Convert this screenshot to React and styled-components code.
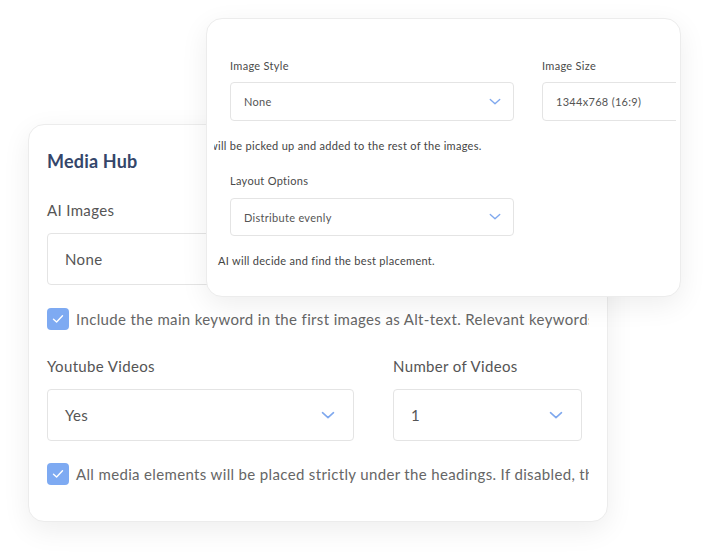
import React from 'react';
import styled, { createGlobalStyle } from 'styled-components';

const GlobalStyle = createGlobalStyle`
    html, body {
        margin: 0;
        padding: 0;
        background: #ffffff;
    }
    body {
        font-family: Lato, "Open Sans", sans-serif;
    }
`;

const Stage = styled.div`
    position: relative;
    width: 704px;
    height: 553px;
    overflow: hidden;
    padding: 124px 0 0 28px;
    box-sizing: border-box;
`;

const Card = styled.div`
    background: #ffffff;
    border: 1px solid #ececec;
    border-radius: 16px;
    box-shadow: 0 8px 28px rgba(0, 0, 0, 0.07);
    box-sizing: border-box;
`;

const BackCard = styled(Card)`
    width: 580px;
    height: 398px;
    padding: 26px 18px 0 18px;
`;

const FrontCard = styled(Card)`
    position: absolute;
    left: 206px;
    top: 18px;
    width: 475px;
    height: 279px;
    padding: 40px 4px 0 7px;
`;

const Clip = styled.div`
    overflow: hidden;
    width: 100%;
`;

const Title = styled.h2`
    margin: 0;
    font-size: 18px;
    line-height: 21px;
    font-weight: 700;
    letter-spacing: 0.2px;
    color: #34466a;
`;

const Label = styled.div`
    font-size: ${p => p.small ? '11px' : '15px'};
    line-height: ${p => p.small ? '14px' : '18px'};
    letter-spacing: ${p => p.small ? '0.3px' : '0.35px'};
    color: ${p => p.small ? '#4a4a4a' : '#555555'};
    margin-top: ${p => p.top || 0}px;
    white-space: nowrap;
`;

const Select = styled.div`
    display: flex;
    align-items: center;
    justify-content: space-between;
    box-sizing: border-box;
    width: ${p => p.w ? p.w + 'px' : '100%'};
    height: ${p => p.h}px;
    margin-top: ${p => p.top}px;
    padding: 0 ${p => p.small ? 12 : 18}px 0 ${p => p.small ? 13 : 17}px;
    border: 1px solid #e4e4e4;
    border-radius: 4px;
    background: #fff;
    font-size: ${p => p.small ? '11px' : '15px'};
    letter-spacing: ${p => p.small ? '0.3px' : '0.35px'};
    color: #555555;
    white-space: nowrap;
`;

const Row = styled.div`
    display: grid;
    grid-template-columns: ${p => p.cols};
    column-gap: ${p => p.gap}px;
    margin-top: ${p => p.top || 0}px;
`;

const CheckRow = styled.div`
    display: flex;
    align-items: center;
    gap: 7px;
    margin-top: ${p => p.top}px;
    width: 542px;
    overflow: hidden;
    white-space: nowrap;
    font-size: 15px;
    letter-spacing: 0.35px;
    color: #666666;
`;

const Box = styled.span`
    flex: none;
    width: 22px;
    height: 22px;
    border-radius: 4px;
    background: #7eaaf2;
    display: flex;
    align-items: center;
    justify-content: center;
`;

const Hint = styled.div`
    font-size: 11px;
    line-height: 14px;
    letter-spacing: 0.3px;
    color: #444444;
    white-space: nowrap;
    margin-top: ${p => p.top}px;
    margin-left: ${p => p.left}px;
`;

const Inner = styled.div`
    padding-left: 16px;
`;

const Chevron = ({ size = 14 }) => (
    <svg width={size} height={size * 0.6} viewBox="0 0 14 8" fill="none">
        <path d="M1.5 1.5 L7 6.5 L12.5 1.5" stroke="#7fa8ee" strokeWidth="1.6" strokeLinecap="round" strokeLinejoin="round" />
    </svg>
);

const Check = () => (
    <svg width="12" height="10" viewBox="0 0 12 10" fill="none">
        <path d="M1.5 5.2 L4.6 8 L10.5 1.8" stroke="#ffffff" strokeWidth="1.4" strokeLinecap="round" strokeLinejoin="round" />
    </svg>
);

export default function App() {
    return (
        <Stage>
            <GlobalStyle />
            <BackCard>
                <Title>Media Hub</Title>
                <Label top={29}>AI Images</Label>
                <Select h={52} top={14} w={400}>None<Chevron /></Select>
                <CheckRow top={23}>
                    <Box><Check /></Box>
                    Include the main keyword in the first images as Alt-text. Relevant keywords will be picked up and added to the rest of the images.
                </CheckRow>
                <Row cols="307px 189px" gap={39} top={27}>
                    <div>
                        <Label>Youtube Videos</Label>
                        <Select h={52} top={14}>Yes<Chevron /></Select>
                    </div>
                    <div>
                        <Label>Number of Videos</Label>
                        <Select h={52} top={14}>1<Chevron /></Select>
                    </div>
                </Row>
                <CheckRow top={22}>
                    <Box><Check /></Box>
                    All media elements will be placed strictly under the headings. If disabled, they will be distributed.
                </CheckRow>
            </BackCard>

            <FrontCard>
                <Clip>
                    <Inner>
                        <Row cols="284px 160px" gap={28}>
                            <div>
                                <Label small>Image Style</Label>
                                <Select small h={39} top={9}>None<Chevron size={12} /></Select>
                            </div>
                            <div>
                                <Label small>Image Size</Label>
                                <Select small h={39} top={9}>1344x768 (16:9)</Select>
                            </div>
                        </Row>
                    </Inner>
                    <Hint top={18} left={-5}>will be picked up and added to the rest of the images.</Hint>
                    <Inner>
                        <Label small top={21}>Layout Options</Label>
                        <Select small w={284} h={38} top={10}>Distribute evenly<Chevron size={12} /></Select>
                    </Inner>
                    <Hint top={18} left={4}>AI will decide and find the best placement.</Hint>
                </Clip>
            </FrontCard>
        </Stage>
    );
}
